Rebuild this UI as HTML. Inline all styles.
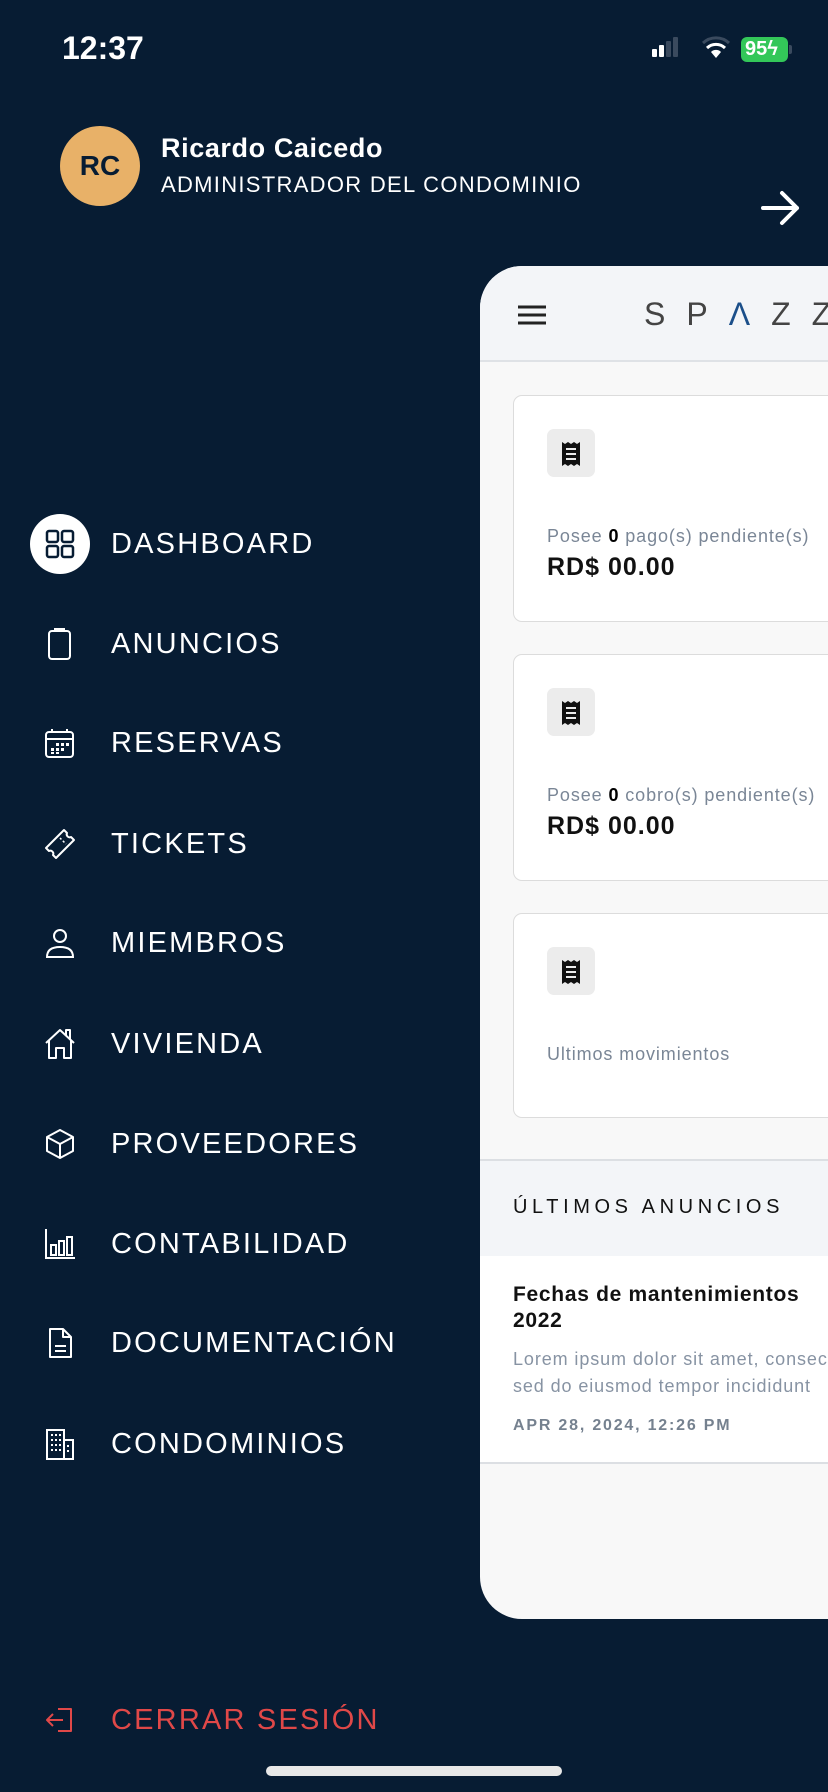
<!DOCTYPE html>
<html><head><meta charset="utf-8"><style>
*{margin:0;padding:0;box-sizing:border-box}
body{width:828px;height:1792px;background:#071c33;font-family:"Liberation Sans",sans-serif;position:relative;overflow:hidden;color:#fff}
.abs{position:absolute}
.menu{position:absolute;left:111px;font-size:29px;letter-spacing:2.2px;color:#fff;line-height:34px}
.ic{position:absolute;left:44px;width:32px;height:32px}
.panel{position:absolute;left:480px;top:266px;width:400px;height:1353px;background:#f8f8f8;border-radius:42px 0 0 42px;overflow:hidden}
.card{position:absolute;left:33px;width:400px;background:#fff;border:1.5px solid #dcdcdc;border-radius:9px}
.ib{position:absolute;left:33px;top:33px;width:48px;height:48px;background:#ececec;border-radius:7px}
.ptxt{position:absolute;left:33px;font-size:18px;letter-spacing:0.9px;color:#7a8696;white-space:nowrap}
.ptxt b{color:#000}
.amt{position:absolute;left:33px;font-size:25px;letter-spacing:1px;font-weight:bold;color:#111;white-space:nowrap}
</style></head><body>
<div class="abs" style="left:62px;top:30px;font-size:32px;font-weight:bold;">12:37</div>
<svg class="abs" style="left:652px;top:36px" width="80" height="28">
<rect x="0" y="13" width="5" height="8" rx="1" fill="#fff"/><rect x="7" y="9" width="5" height="12" rx="1" fill="#fff"/><rect x="14" y="5" width="5" height="16" rx="1" fill="#3a4a5e"/><rect x="21" y="1" width="5" height="20" rx="1" fill="#3a4a5e"/>
<path d="M64 22 L59 16 A7 7 0 0 1 69 16 Z" fill="#fff"/><path d="M55 12 A13 13 0 0 1 73 12" stroke="#fff" stroke-width="3" fill="none"/><path d="M51 7 A19 19 0 0 1 77 7" stroke="#3a4a5e" stroke-width="3" fill="none"/>
</svg>
<div class="abs" style="left:741px;top:37px;width:47px;height:25px;background:#33c759;border-radius:6px;font-size:20px;font-weight:bold;line-height:25px;padding-left:4px;color:#fff">95ϟ</div>
<div class="abs" style="left:789px;top:45px;width:3px;height:9px;background:#3a4a5e;border-radius:0 2px 2px 0"></div>
<div class="abs" style="left:60px;top:126px;width:80px;height:80px;border-radius:50%;background:#e8b168;color:#071c33;font-weight:bold;font-size:28px;text-align:center;line-height:80px">RC</div>
<div class="abs" style="left:161px;top:133px;font-size:27px;letter-spacing:0.6px;font-weight:bold">Ricardo Caicedo</div>
<div class="abs" style="left:161px;top:172px;font-size:22px;letter-spacing:1.3px">ADMINISTRADOR DEL CONDOMINIO</div>
<svg class="abs" style="left:760px;top:188px" width="42" height="40"><path d="M3 20 H37 M22 5 L37 20 L22 35" stroke="#fff" stroke-width="4" fill="none" stroke-linecap="round" stroke-linejoin="round"/></svg>
<div class="abs" style="left:30px;top:514px;width:60px;height:60px;border-radius:50%;background:#fff"></div>
<svg class="ic" style="top:528px;left:44px" width="32" height="32"><g fill="none" stroke="#071c33" stroke-width="2.5"><rect x="3" y="3" width="11" height="11" rx="2"/><rect x="18" y="3" width="11" height="11" rx="2"/><rect x="3" y="18" width="11" height="11" rx="2"/><rect x="18" y="18" width="11" height="11" rx="2"/></g></svg>
<div class="menu" style="top:527px">DASHBOARD</div>
<svg class="ic" style="top:628px" width="32" height="32"><g fill="none" stroke="#fff" stroke-width="2"><rect x="5" y="3" width="21" height="28" rx="3"/><path d="M11 3 V1 H20 V3"/></g></svg>
<div class="menu" style="top:627px">ANUNCIOS</div>
<svg class="ic" style="top:728px" width="32" height="32"><g fill="none" stroke="#fff" stroke-width="2"><rect x="2" y="4" width="27" height="25" rx="3"/><path d="M2 11 H29 M8 1 V5 M23 1 V5"/></g><g fill="#fff"><rect x="7" y="20" width="3" height="3"/><rect x="12" y="20" width="3" height="3"/><rect x="17" y="20" width="3" height="3"/><rect x="12" y="15" width="3" height="3"/><rect x="17" y="15" width="3" height="3"/><rect x="22" y="15" width="3" height="3"/><rect x="7" y="24" width="3" height="2"/><rect x="12" y="24" width="3" height="2"/></g></svg>
<div class="menu" style="top:726px">RESERVAS</div>
<svg class="ic" style="top:828px" width="32" height="32"><path d="M2 20 L20 2 L23 5 A3 3 0 0 0 27 9 L30 12 L12 30 L9 27 A3 3 0 0 0 5 23 Z" fill="none" stroke="#fff" stroke-width="2" stroke-linejoin="round"/><path d="M16 10 L19 13 M19 13 L22 16" stroke="#fff" stroke-width="1.5" stroke-dasharray="2 2"/></svg>
<div class="menu" style="top:827px">TICKETS</div>
<svg class="ic" style="top:927px" width="32" height="32"><g fill="none" stroke="#fff" stroke-width="2"><circle cx="16" cy="9" r="6"/><path d="M3 30 Q3 20 16 20 Q29 20 29 30 Z"/></g></svg>
<div class="menu" style="top:926px">MIEMBROS</div>
<svg class="ic" style="top:1028px" width="32" height="32"><path d="M2 15 L16 2 L30 15 M5 12 V30 H12 V20 H20 V30 H27 V12 M22 7 V2 H26 V11" fill="none" stroke="#fff" stroke-width="2" stroke-linejoin="round"/></svg>
<div class="menu" style="top:1027px">VIVIENDA</div>
<svg class="ic" style="top:1128px" width="32" height="32"><path d="M16 2 L29 9 V23 L16 30 L3 23 V9 Z M3 9 L16 16 L29 9 M16 16 V30" fill="none" stroke="#fff" stroke-width="2" stroke-linejoin="round"/></svg>
<div class="menu" style="top:1127px">PROVEEDORES</div>
<svg class="ic" style="top:1228px" width="32" height="32"><g fill="none" stroke="#fff" stroke-width="2"><path d="M2 1 V30 H31"/><rect x="7" y="17" width="5" height="10"/><rect x="15" y="13" width="5" height="14"/><rect x="23" y="9" width="5" height="18"/></g></svg>
<div class="menu" style="top:1227px">CONTABILIDAD</div>
<svg class="ic" style="top:1327px" width="32" height="32"><path d="M6 2 H19 L27 10 V30 H6 Z M19 2 V10 H27 M11 19 H22 M11 24 H22" fill="none" stroke="#fff" stroke-width="2" stroke-linejoin="round"/></svg>
<div class="menu" style="top:1326px">DOCUMENTACIÓN</div>
<svg class="ic" style="top:1428px" width="32" height="32"><g fill="none" stroke="#fff" stroke-width="2"><rect x="3" y="2" width="17" height="29"/><rect x="20" y="12" width="9" height="19"/></g><g fill="#fff"><rect x="7" y="6" width="2" height="2"/><rect x="11" y="6" width="2" height="2"/><rect x="15" y="6" width="2" height="2"/><rect x="7" y="11" width="2" height="2"/><rect x="11" y="11" width="2" height="2"/><rect x="15" y="11" width="2" height="2"/><rect x="7" y="16" width="2" height="2"/><rect x="11" y="16" width="2" height="2"/><rect x="15" y="16" width="2" height="2"/><rect x="7" y="21" width="2" height="2"/><rect x="11" y="21" width="2" height="2"/><rect x="15" y="21" width="2" height="2"/><rect x="23" y="17" width="2" height="2"/><rect x="23" y="22" width="2" height="2"/></g></svg>
<div class="menu" style="top:1427px">CONDOMINIOS</div>
<svg class="ic" style="top:1704px" width="32" height="32"><path d="M14 5 H27 V27 H14 M19 16 H3 M9 10 L3 16 L9 22" fill="none" stroke="#e04848" stroke-width="2" stroke-linejoin="round"/></svg>
<div class="menu" style="top:1703px;color:#e04848">CERRAR SESIÓN</div>
<div class="abs" style="left:266px;top:1766px;width:296px;height:10px;border-radius:5px;background:#e8e8e8"></div>
<div class="panel">
 <div class="abs" style="left:0;top:0;width:400px;height:96px;background:#f3f5f8;border-bottom:2px solid #dfe2e6"></div>
 <svg class="abs" style="left:37px;top:38px" width="30" height="24"><path d="M1 3 H29 M1 11 H29 M1 19 H29" stroke="#222" stroke-width="3"/></svg>
 <div class="abs" style="left:164px;top:30px;font-size:32px;color:#444;letter-spacing:21px;white-space:nowrap">S<span>P</span><span style="color:#1b4f8a">Λ</span>ZZ</div>
 <div class="card" style="top:129px;height:227px"><div class="ib"></div>
  <svg class="abs" style="left:46px;top:45px" width="22" height="26"><path d="M2 1 L5 3 L8 1 L11 3 L14 1 L17 3 L20 1 V25 L17 23 L14 25 L11 23 L8 25 L5 23 L2 25 Z" fill="#111"/><path d="M6 8 H16 M6 13 H16 M6 18 H16" stroke="#ececec" stroke-width="2"/></svg>
  <div class="ptxt" style="top:130px">Posee <b>0</b> pago(s) pendiente(s)</div>
  <div class="amt" style="top:157px">RD$ 00.00</div></div>
 <div class="card" style="top:388px;height:227px"><div class="ib"></div>
  <svg class="abs" style="left:46px;top:45px" width="22" height="26"><path d="M2 1 L5 3 L8 1 L11 3 L14 1 L17 3 L20 1 V25 L17 23 L14 25 L11 23 L8 25 L5 23 L2 25 Z" fill="#111"/><path d="M6 8 H16 M6 13 H16 M6 18 H16" stroke="#ececec" stroke-width="2"/></svg>
  <div class="ptxt" style="top:130px">Posee <b>0</b> cobro(s) pendiente(s)</div>
  <div class="amt" style="top:157px">RD$ 00.00</div></div>
 <div class="card" style="top:647px;height:205px"><div class="ib"></div>
  <svg class="abs" style="left:46px;top:45px" width="22" height="26"><path d="M2 1 L5 3 L8 1 L11 3 L14 1 L17 3 L20 1 V25 L17 23 L14 25 L11 23 L8 25 L5 23 L2 25 Z" fill="#111"/><path d="M6 8 H16 M6 13 H16 M6 18 H16" stroke="#ececec" stroke-width="2"/></svg>
  <div class="ptxt" style="top:130px">Ultimos movimientos</div></div>
 <div class="abs" style="left:0;top:893px;width:400px;height:97px;background:#f3f5f8;border-top:2px solid #dcdfe3"></div>
 <div class="abs" style="left:33px;top:930px;font-size:20px;letter-spacing:4.6px;color:#111;white-space:nowrap">ÚLTIMOS ANUNCIOS</div>
 <div class="abs" style="left:0;top:990px;width:400px;height:208px;background:#fff;border-bottom:2px solid #dcdfe3"></div>
 <div class="abs" style="left:33px;top:1016px;font-size:21px;letter-spacing:0.7px;font-weight:bold;color:#111;line-height:26px;white-space:nowrap">Fechas de mantenimientos<br>2022</div>
 <div class="abs" style="left:33px;top:1080px;font-size:18px;letter-spacing:0.9px;color:#8793a3;line-height:27px;white-space:nowrap">Lorem ipsum dolor sit amet, consectetur<br>sed do eiusmod tempor incididunt</div>
 <div class="abs" style="left:33px;top:1151px;font-size:16px;font-weight:bold;color:#75818f;letter-spacing:1.8px;white-space:nowrap">APR 28, 2024, 12:26 PM</div>
</div>
</body></html>
